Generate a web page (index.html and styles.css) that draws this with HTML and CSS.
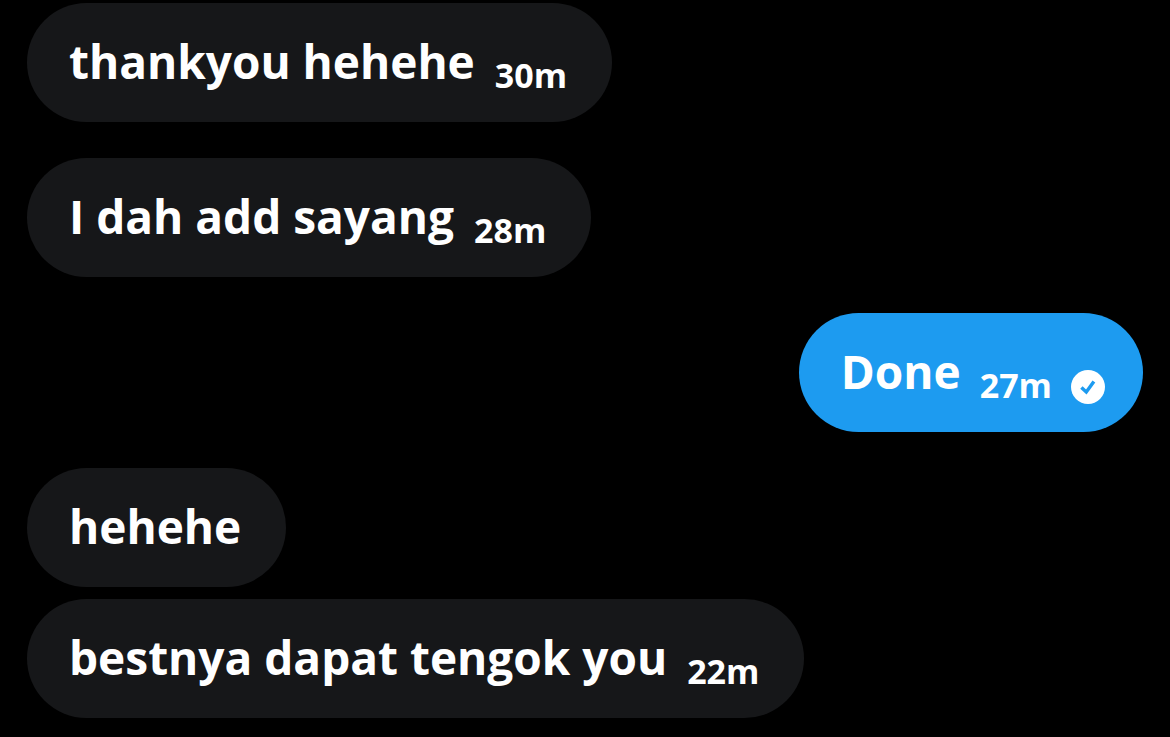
FILE: index.html
```html
<!DOCTYPE html>
<html lang="ms">
<head>
<meta charset="utf-8">
<meta name="viewport" content="width=device-width, initial-scale=1">
<title>Messages</title>
<link rel="stylesheet" href="styles.css">
</head>
<body>
<main class="chat">
  <div class="group">
    <div class="bubble"><p class="text">thankyou hehehe</p><time class="time">30m</time></div>
  </div>
  <div class="group">
    <div class="bubble"><p class="text">I dah add sayang</p><time class="time">28m</time></div>
  </div>
  <div class="group sent">
    <div class="bubble"><p class="text">Done</p><time class="time">27m</time>
      <svg class="check" viewBox="0 0 34 34" role="img" aria-label="Sent"><circle cx="17" cy="17" r="17" fill="#fff"/><path d="M10.4 17.4l4.9 4.6 7.6-10.6" fill="none" stroke="#1d9bf0" stroke-width="3.4"/></svg>
    </div>
  </div>
  <div class="group">
    <div class="bubble"><p class="text">hehehe</p></div>
    <div class="bubble"><p class="text">bestnya dapat tengok you</p><time class="time">22m</time></div>
  </div>
</main>
</body>
</html>
```
FILE: styles.css
```css
* { box-sizing: border-box; }
body {
  margin: 0;
  background: #000;
  color: #fff;
  font-family: "Open Sans", "Noto Sans", sans-serif;
  font-weight: 700;
}
.chat {
  display: flex;
  flex-direction: column;
  gap: 36px;
  padding: 3px 27px 19px;
}
.group {
  display: flex;
  flex-direction: column;
  align-items: flex-start;
  gap: 12px;
}
.sent { align-items: flex-end; }
.bubble {
  display: flex;
  align-items: flex-start;
  gap: 20px;
  padding: 28px 45px 31px 42px;
  border-radius: 60px;
  background: #161719;
}
.sent .bubble {
  gap: 19px;
  padding-right: 38px;
  background: #1d9bf0;
}
.text {
  margin: 0;
  font-size: 46px;
  line-height: 60px;
}
.time {
  padding-top: 28px;
  font-size: 34px;
  line-height: 32px;
}
.check {
  width: 34px;
  height: 34px;
  margin-top: 29px;
  margin-bottom: -3px;
}
```
